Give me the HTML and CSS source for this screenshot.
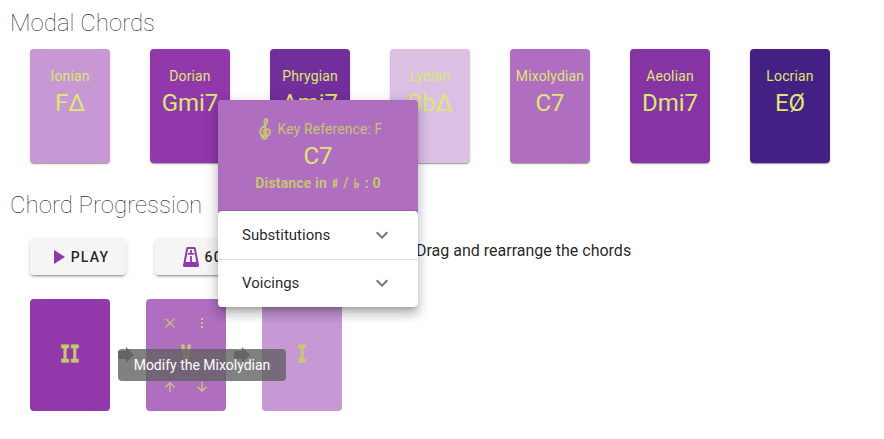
FILE: index.html
```
<!DOCTYPE html>
<html lang="en">
<head>
<meta charset="utf-8">
<title>Modal Chords</title>
<link rel="stylesheet" href="styles.css">
</head>
<body>
<main>
  <h2 class="heading">Modal Chords</h2>
  <section class="modes">
    <article class="mode ionian"><span class="name">Ionian</span><span class="chord">FΔ</span></article>
    <article class="mode dorian"><span class="name">Dorian</span><span class="chord">Gmi7</span></article>
    <article class="mode phrygian"><span class="name">Phrygian</span><span class="chord">Ami7</span></article>
    <article class="mode lydian"><span class="name">Lydian</span><span class="chord">BbΔ</span></article>
    <article class="mode mixolydian"><span class="name">Mixolydian</span><span class="chord">C7</span></article>
    <article class="mode aeolian"><span class="name">Aeolian</span><span class="chord">Dmi7</span></article>
    <article class="mode locrian"><span class="name">Locrian</span><span class="chord">EØ</span></article>
  </section>
  <h2 class="heading">Chord Progression</h2>
  <section class="controls">
    <button class="button play"><svg viewBox="0 0 24 24"><path d="M8 5v14l11-7z"/></svg>PLAY</button>
    <button class="button tempo"><svg viewBox="0 0 24 24"><path fill-rule="evenodd" d="M9 2h6q1.400 0 1.800 1.300L20 20.500q.2 1.500-1.500 1.500h-13Q3.800 22 4 20.500L7.200 3.300Q7.600 2 9 2zM9.100 4 6.700 17h4.400v-6h1.800v6h4.400L14.900 4z"/><path d="M11.100 5h1.800v3H15v1.700H9V8h2.100z"/></svg>60 BPM</button>
    <p class="hint">Drag and rearrange the chords</p>
  </section>
  <section class="progression">
    <article class="step dorian"><b>II</b></article>
    <svg class="next" viewBox="0 0 16 16"><path d="M0 4h8V0l8 8-8 8v-4H0z"/></svg>
    <article class="step mixolydian">
      <div class="actions">
        <svg viewBox="0 0 10 10"><path d="m.6.6 8.800 8.800M9.400.6.600 9.400"/></svg>
        <svg viewBox="0 0 10 10"><path d="M5 0v2M5 4v2M5 8v2" stroke-width="2"/></svg>
      </div>
      <b>V</b>
      <div class="actions">
        <svg viewBox="0 0 10 10"><path d="M5 10V.8M.5 5.300 5 .8l4.500 4.500"/></svg>
        <svg viewBox="0 0 10 10"><path d="M5 0v9.200M.5 4.700 5 9.200l4.500-4.500"/></svg>
      </div>
    </article>
    <svg class="next" viewBox="0 0 16 16"><path d="M0 4h8V0l8 8-8 8v-4H0z"/></svg>
    <article class="step ionian"><b>I</b></article>
  </section>
</main>
<div class="tooltip">Modify the Mixolydian</div>
<aside class="popover">
  <header class="summary mixolydian">
    <div class="key"><svg viewBox="0 0 12 22"><path d="M3.300 18.600c-.2 2.900 4.800 3.200 4.500-.3L5.500 4.200C5.300 2 6.200.9 7.300.8c1.900 1.500 1 4.500-1 6.200C4 9 1.200 10.800 1.200 14c0 5.300 9.800 5.200 9.800.3 0-4.100-6.200-4.100-6.200-.5 0 1.200.8 2 1.700 2.200"/><circle cx="3.800" cy="18.500" r="1"/></svg><span>Key Reference: F</span></div>
    <div class="chord">C7</div>
    <div class="distance">Distance in <span class="accidental">♯</span> / <span class="accidental">♭</span> : 0</div>
  </header>
  <div class="row">Substitutions<svg viewBox="0 0 24 24"><path d="M16.590 8.590 12 13.170 7.410 8.590 6 10l6 6 6-6z"/></svg></div>
  <div class="row">Voicings<svg viewBox="0 0 24 24"><path d="M16.590 8.590 12 13.170 7.410 8.590 6 10l6 6 6-6z"/></svg></div>
</aside>
</body>
</html>
```
FILE: styles.css
```
* { box-sizing: border-box; }
body {
  margin: 0;
  height: 439px;
  overflow: hidden;
  background: #fff;
  color: rgba(0, 0, 0, .87);
  font-family: Roboto, "DejaVu Sans", sans-serif;
}
main { padding-top: 7px; }
.heading {
  margin: 0;
  padding-left: 10px;
  font-size: 24px;
  font-weight: 100;
  line-height: 32px;
}
.modes { display: flex; gap: 40px; padding: 10px 30px 26px; }
.mode {
  display: flex;
  flex-direction: column;
  align-items: center;
  width: 80px;
  height: 114px;
  padding-top: 17px;
  border-radius: 4px;
  color: #dce775;
  box-shadow: 0 2px 1px -1px rgba(0, 0, 0, .2), 0 1px 1px rgba(0, 0, 0, .14), 0 1px 3px rgba(0, 0, 0, .12);
}
.name { font-size: 14px; line-height: 21px; letter-spacing: .14px; white-space: nowrap; }
.chord { font-size: 24px; line-height: 32px; }
.ionian { background: #c798d4; }
.dorian { background: #9138aa; }
.phrygian { background: #722e9a; }
.lydian { background: #dbc0e4; }
.mixolydian { background: #b06ec1; }
.aeolian { background: #8633a4; }
.locrian { background: #442084; }
.controls { display: flex; padding: 18px 30px 24px; }
.button {
  display: flex;
  align-items: center;
  justify-content: center;
  height: 36px;
  padding: 0;
  border: 0;
  border-radius: 4px;
  background: #f5f5f5;
  color: rgba(0, 0, 0, .87);
  font: 500 14px Roboto, sans-serif;
  letter-spacing: 1.25px;
  box-shadow: 0 3px 1px -2px rgba(0, 0, 0, .2), 0 2px 2px rgba(0, 0, 0, .14), 0 1px 5px rgba(0, 0, 0, .12);
}
.button svg { fill: #9138aa; }
.play { width: 96px; }
.play svg { width: 24px; height: 24px; margin-right: 1px; margin-left: -1px; }
.tempo { width: 130px; margin-left: 29px; }
.tempo svg { width: 24px; height: 24px; margin-right: 2px; }
.hint { margin: 0 0 0 131px; font-size: 16px; line-height: 24px; }
.progression { display: flex; align-items: center; gap: 10px; padding-left: 30px; }
.step {
  display: flex;
  flex-direction: column;
  justify-content: center;
  align-items: center;
  width: 80px;
  height: 112px;
  border-radius: 4px;
  color: #c6c970;
}
.step b {
  font: bold 23px/52px "DejaVu Sans Mono", monospace;
  transform: translateY(-1px) scaleX(.72);
  -webkit-text-stroke: .8px currentColor;
}
.actions { display: flex; gap: 22px; height: 12px; align-items: center; }
.actions svg { width: 10px; height: 10px; fill: none; stroke: currentColor; stroke-width: 1.3; }
.next { width: 16px; height: 16px; margin: 0 2px 0 -2px; fill: #757575; }
.tooltip {
  position: absolute;
  left: 118px;
  top: 349px;
  width: 168px;
  height: 32px;
  border-radius: 4px;
  background: rgba(97, 97, 97, .8);
  color: #fff;
  font-size: 14px;
  line-height: 33px;
  text-align: center;
}
.popover {
  position: absolute;
  left: 218px;
  top: 100px;
  width: 200px;
  height: 207px;
  border-radius: 4px;
  overflow: hidden;
  background: #b06ec1;
  box-shadow: 0 5px 5px -3px rgba(0, 0, 0, .2), 0 8px 10px 1px rgba(0, 0, 0, .14), 0 3px 14px 2px rgba(0, 0, 0, .12);
}
.summary { height: 111px; padding-top: 17px; color: #dce775; text-align: center; box-shadow: inset 0 -1px #995fa8; }
.key { display: flex; justify-content: center; align-items: center; height: 23px; gap: 7px; padding-left: 5px; color: #c6c670; font-size: 14px; letter-spacing: .1px; }
.key svg { width: 12px; height: 22px; fill: none; stroke: currentColor; stroke-width: 1.9; }
.distance { color: #c6c670; font-size: 14px; line-height: 22px; font-weight: 700; letter-spacing: .15px; }
.accidental { display: inline-block; width: 9px; font-size: 13px; line-height: 1; -webkit-text-stroke: .7px currentColor; }
.row {
  display: flex;
  align-items: center;
  justify-content: space-between;
  height: 48px;
  padding: 0 24px;
  background: #fff;
  font-size: 15px;
}
.row:nth-child(2) { height: 49px; border-bottom: 1px solid #ddd; border-radius: 4px 4px 0 0; }
.row:nth-child(3) { padding-bottom: 2px; }
.row svg { width: 24px; height: 24px; fill: #757575; }
```
